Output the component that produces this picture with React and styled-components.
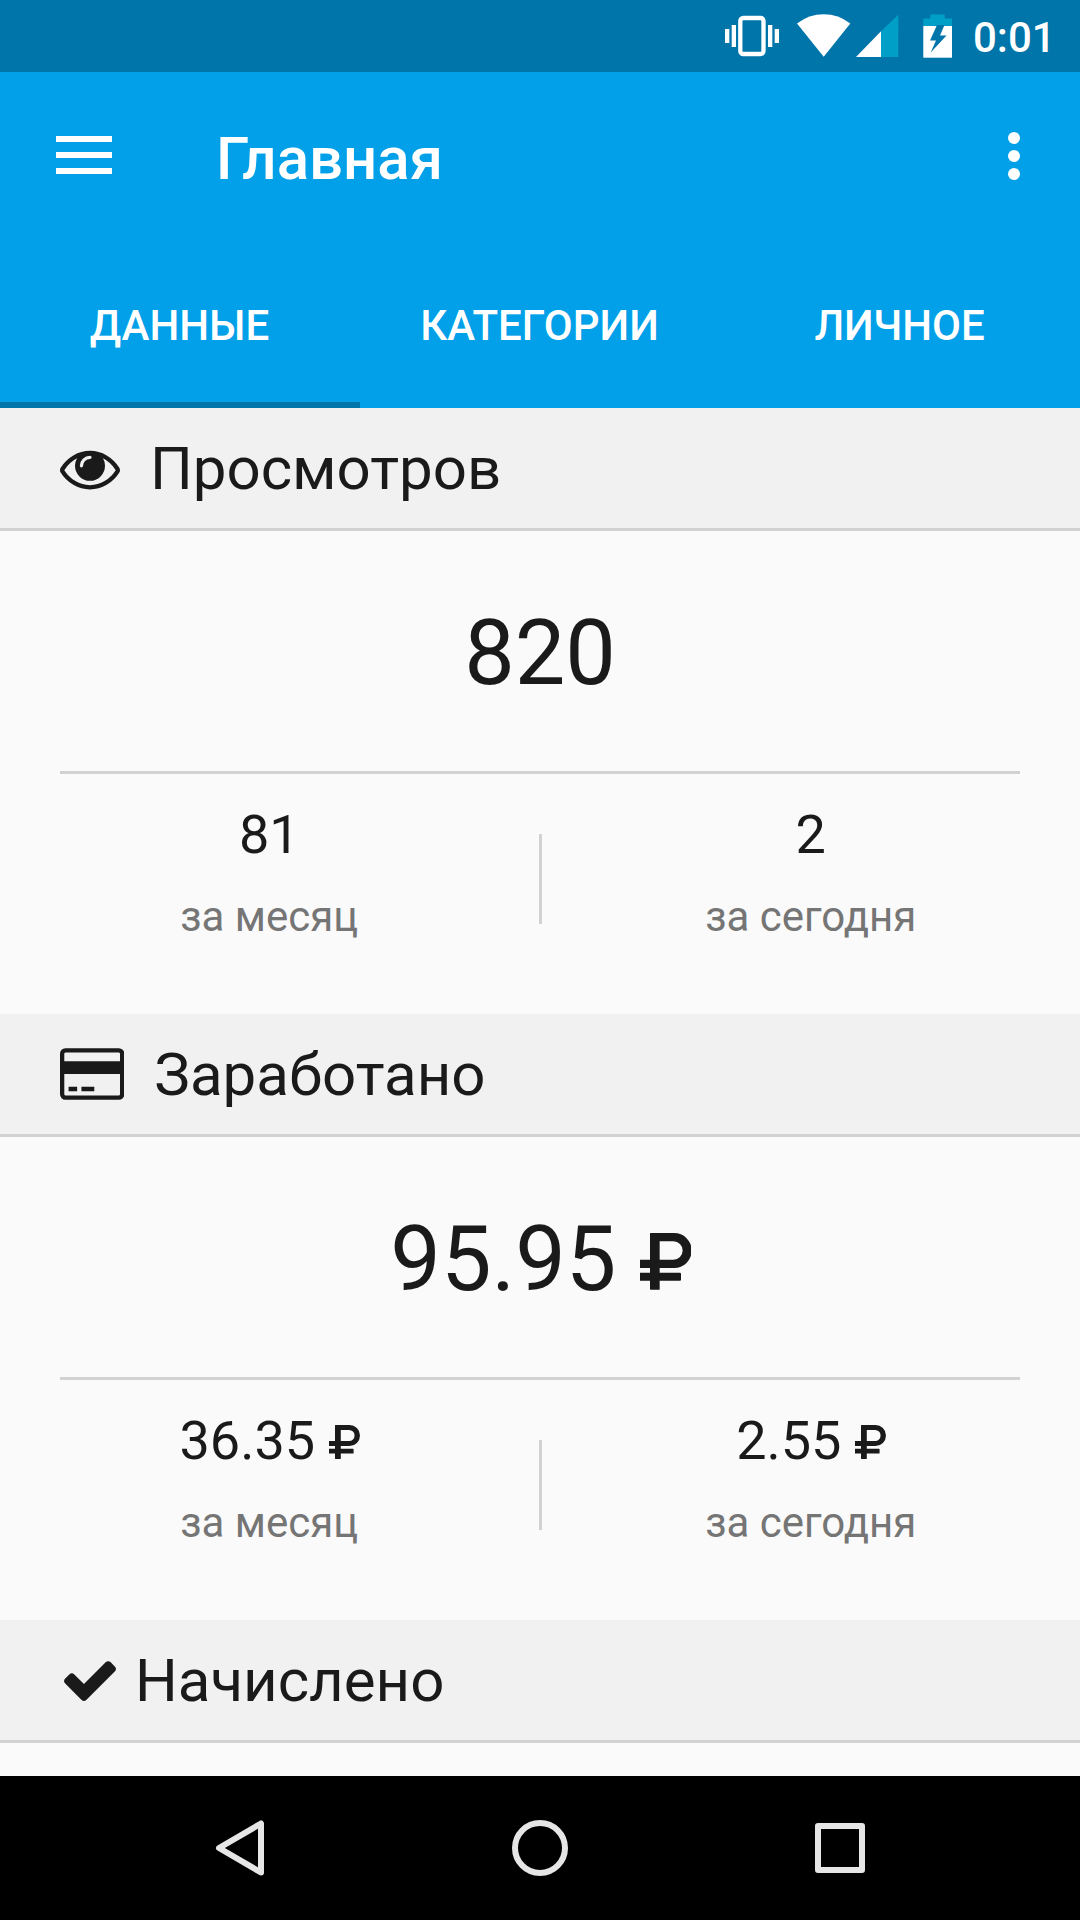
import styled, { createGlobalStyle } from 'styled-components';

const tabs = ['ДАННЫЕ', 'КАТЕГОРИИ', 'ЛИЧНОЕ'];

const sections = [
  { title: 'Просмотров', icon: 'eye', total: '820', month: '81', today: '2' },
  { title: 'Заработано', icon: 'card', total: '95.95', month: '36.35', today: '2.55', money: true },
  { title: 'Начислено', icon: 'check' },
];

const icons = {
  eye: {
    width: 60,
    gap: 30,
    box: '0 0 1792 1792',
    path: 'M1664 960q-152-236-381-353 61 104 61 225 0 185-131.5 316.5t-316.5 131.5-316.5-131.5-131.5-316.5q0-121 61-225-229 117-381 353 133 205 333.5 326.5t434.5 121.5 434.5-121.5 333.5-326.5zm-720-384q0-20-14-34t-34-14q-125 0-214.5 89.5t-89.5 214.5q0 20 14 34t34 14 34-14 14-34q0-86 61-147t147-61q20 0 34-14t14-34zm848 384q0 34-20 69-140 230-376.5 368.5t-499.5 138.5-499.5-139-376.5-368q-20-35-20-69t20-69q140-229 376.5-368t499.5-139 499.5 139 376.5 368q20 35 20 69z',
  },
  card: {
    width: 64.3,
    gap: 30,
    box: '0 0 1920 1792',
    path: 'M1760 128q66 0 113 47t47 113v1216q0 66-47 113t-113 47h-1600q-66 0-113-47t-47-113v-1216q0-66 47-113t113-47h1600zm-1600 128q-13 0-22.5 9.5t-9.5 22.5v224h1664v-224q0-13-9.5-22.5t-22.5-9.5h-1600zm1600 1280q13 0 22.5-9.5t9.5-22.5v-608h-1664v608q0 13 9.5 22.5t22.5 9.5h1600zm-1504-128v-128h256v128h-256zm384 0v-128h384v128h-384z',
  },
  check: {
    width: 60,
    gap: 15,
    box: '0 0 1792 1792',
    path: 'M1671 566q0 40-28 68l-724 724-136 136q-28 28-68 28t-68-28l-136-136-362-362q-28-28-28-68t28-68l136-136q28-28 68-28t68 28l294 295 656-657q28-28 68-28t68 28l136 136q28 28 28 68z',
  },
};

function Amount({ value, money }) {
  return (
    <>
      {value}
      {money && (
        <Ruble viewBox="0 0 155 170">
          <path
            fillRule="evenodd"
            d="M32 0H102.500a52.500 52.500 0 0 1 0 105H59v14h61q3 0 3 3v18q0 3-3 3H59v27H32q-2 0-2-2v-25H0v-24h30v-14H0V80h30V2q0-2 2-2zM59 25v55h41.500a27.500 27.500 0 0 0 0-55z"
          />
        </Ruble>
      )}
    </>
  );
}

function SectionHead({ title, icon }) {
  const { width, gap, box, path } = icons[icon];

  return (
    <Head>
      <HeadIcon viewBox={box} $width={width} $gap={gap}>
        <path d={path} />
      </HeadIcon>
      <HeadTitle>{title}</HeadTitle>
    </Head>
  );
}

export default function App() {
  return (
    <Screen>
      <GlobalStyle />

      <StatusBar>
        <StatusIcons viewBox="0 0 254 72">
          <rect x="20.300" y="18" width="23.200" height="36" rx="3" fill="none" stroke="#fff" strokeWidth="4.300" />
          <path fill="#fff" d="M11.700 25H16v22h-4.300zM5 29h4.300v14H5zM48 25h4.300v22H48zM54.700 29H59v14h-4.300z" />
          <path fill="#fff" d="M77 23.500Q89 14.300 103.700 14.300T130.300 23.500L103.700 56.700z" />
          <path fill="#009fc7" d="M161 31.300L178.300 14.700V57H161z" />
          <path fill="#fff" d="M136 57L161 31.300V57z" />
          <path fill="#009fc7" d="M210.300 14.500h14.400v4h7.300V26h-28.700v-7.500h7z" />
          <path fill="#fff" d="M203.300 26H232v31.700h-28.700z" />
          <path fill="#0075a9" d="M217 25l-7 15.500h6L210.700 52.500 226.500 35.500h-6.500L224.500 25z" />
        </StatusIcons>
        <Clock>0:01</Clock>
      </StatusBar>

      <AppBar>
        <MenuButton viewBox="0 0 56 38">
          <path d="M0 0h56v6H0zM0 16h56v6H0zM0 32h56v6H0z" />
        </MenuButton>
        <PageTitle>Главная</PageTitle>
        <MoreButton viewBox="0 0 12 48">
          <circle cx="6" cy="6" r="6" />
          <circle cx="6" cy="24" r="6" />
          <circle cx="6" cy="42" r="6" />
        </MoreButton>
      </AppBar>

      <Tabs>
        {tabs.map((tab, index) => (
          <Tab key={tab} $active={index === 0}>
            {tab}
          </Tab>
        ))}
      </Tabs>

      <Content>
        {sections.map((section) => (
          <Section key={section.title}>
            <SectionHead title={section.title} icon={section.icon} />
            {section.total && (
              <>
                <Total>
                  <Amount value={section.total} money={section.money} />
                </Total>
                <Details>
                  <Detail>
                    <DetailValue>
                      <Amount value={section.month} money={section.money} />
                    </DetailValue>
                    <DetailLabel>за месяц</DetailLabel>
                  </Detail>
                  <Separator />
                  <Detail>
                    <DetailValue>
                      <Amount value={section.today} money={section.money} />
                    </DetailValue>
                    <DetailLabel>за сегодня</DetailLabel>
                  </Detail>
                </Details>
              </>
            )}
          </Section>
        ))}
      </Content>

      <NavBar>
        <NavIcon viewBox="0 0 60 60">
          <path d="M51 5.500V54.500L9 30z" />
        </NavIcon>
        <NavIcon viewBox="0 0 60 60">
          <circle cx="30" cy="30" r="25" />
        </NavIcon>
        <NavIcon viewBox="0 0 60 60">
          <rect x="8" y="8" width="44" height="44" />
        </NavIcon>
      </NavBar>
    </Screen>
  );
}

const GlobalStyle = createGlobalStyle`
  * {
    box-sizing: border-box;
  }

  body {
    margin: 0;
    font-family: Roboto, "Liberation Sans", sans-serif;
  }

  svg {
    display: block;
    flex-shrink: 0;
  }
`;

const Screen = styled.div`
  display: flex;
  flex-direction: column;
  width: 1080px;
  height: 1920px;
  overflow: hidden;
  background: #fafafa;
  color: #1a1a1a;
`;

const StatusBar = styled.div`
  display: flex;
  align-items: center;
  justify-content: flex-end;
  height: 72px;
  padding-right: 27px;
  background: #0075a9;
`;

const StatusIcons = styled.svg`
  width: 254px;
  height: 72px;
`;

const Clock = styled.span`
  width: 79px;
  padding-top: 3px;
  color: #fff;
  font-size: 42px;
  font-weight: 500;
  line-height: 50px;
  text-indent: -1px;
  white-space: nowrap;
`;

const AppBar = styled.header`
  display: flex;
  align-items: center;
  height: 168px;
  padding: 0 60px 0 56px;
  background: #02a0e8;
`;

const MenuButton = styled.svg`
  width: 56px;
  height: 38px;
  margin-bottom: 2px;
  fill: #fff;
`;

const PageTitle = styled.h1`
  flex: 1;
  margin: 6px 0 0 104px;
  color: #fff;
  font-size: 60px;
  font-weight: 500;
  line-height: 70px;
`;

const MoreButton = styled.svg`
  width: 12px;
  height: 48px;
  fill: #fff;
`;

const Tabs = styled.nav`
  display: flex;
  height: 168px;
  background: #02a0e8;
`;

const Tab = styled.div`
  flex: 1;
  padding: 61px 1px 0 0;
  border-bottom: 6px solid ${({ $active }) => ($active ? '#0075a9' : 'transparent')};
  color: #fff;
  font-size: 42px;
  font-weight: 500;
  line-height: 50px;
  text-align: center;
`;

const Content = styled.main`
  flex: 1;
  overflow: hidden;
`;

const Section = styled.section`
  height: 606px;
`;

const Head = styled.div`
  display: flex;
  align-items: center;
  height: 123px;
  padding-left: 60px;
  border-bottom: 3px solid #d2d2d2;
  background: #f1f1f1;
`;

const HeadIcon = styled.svg`
  width: ${({ $width }) => $width}px;
  height: 60px;
  margin-right: ${({ $gap }) => $gap}px;
  fill: #1a1a1a;
`;

const HeadTitle = styled.h2`
  margin: 2px 0 0;
  font-size: 60px;
  font-weight: 400;
  line-height: 70px;
`;

const Total = styled.div`
  display: flex;
  align-items: baseline;
  justify-content: center;
  height: 243px;
  margin: 0 60px;
  padding-top: 70px;
  border-bottom: 3px solid #d2d2d2;
  font-size: 90px;
  line-height: 106px;
`;

const Ruble = styled.svg`
  width: 0.574em;
  height: 0.63em;
  margin: 0 -0.02em 0 0.26em;
  fill: #1a1a1a;
`;

const Details = styled.div`
  display: flex;
`;

const Detail = styled.div`
  flex: 1;
  padding-top: 29px;
  text-align: center;
`;

const DetailValue = styled.div`
  display: flex;
  align-items: baseline;
  justify-content: center;
  font-size: 54px;
  line-height: 64px;
`;

const DetailLabel = styled.div`
  margin-top: 25px;
  color: #757575;
  font-size: 42px;
  line-height: 50px;
`;

const Separator = styled.div`
  width: 3px;
  height: 90px;
  margin-top: 60px;
  background: #d2d2d2;
`;

const NavBar = styled.footer`
  display: flex;
  align-items: center;
  justify-content: center;
  gap: 240px;
  height: 144px;
  background: #000;
`;

const NavIcon = styled.svg`
  width: 60px;
  height: 60px;
  fill: none;
  stroke: #e6e6e6;
  stroke-width: 6;
  stroke-linejoin: round;
`;
